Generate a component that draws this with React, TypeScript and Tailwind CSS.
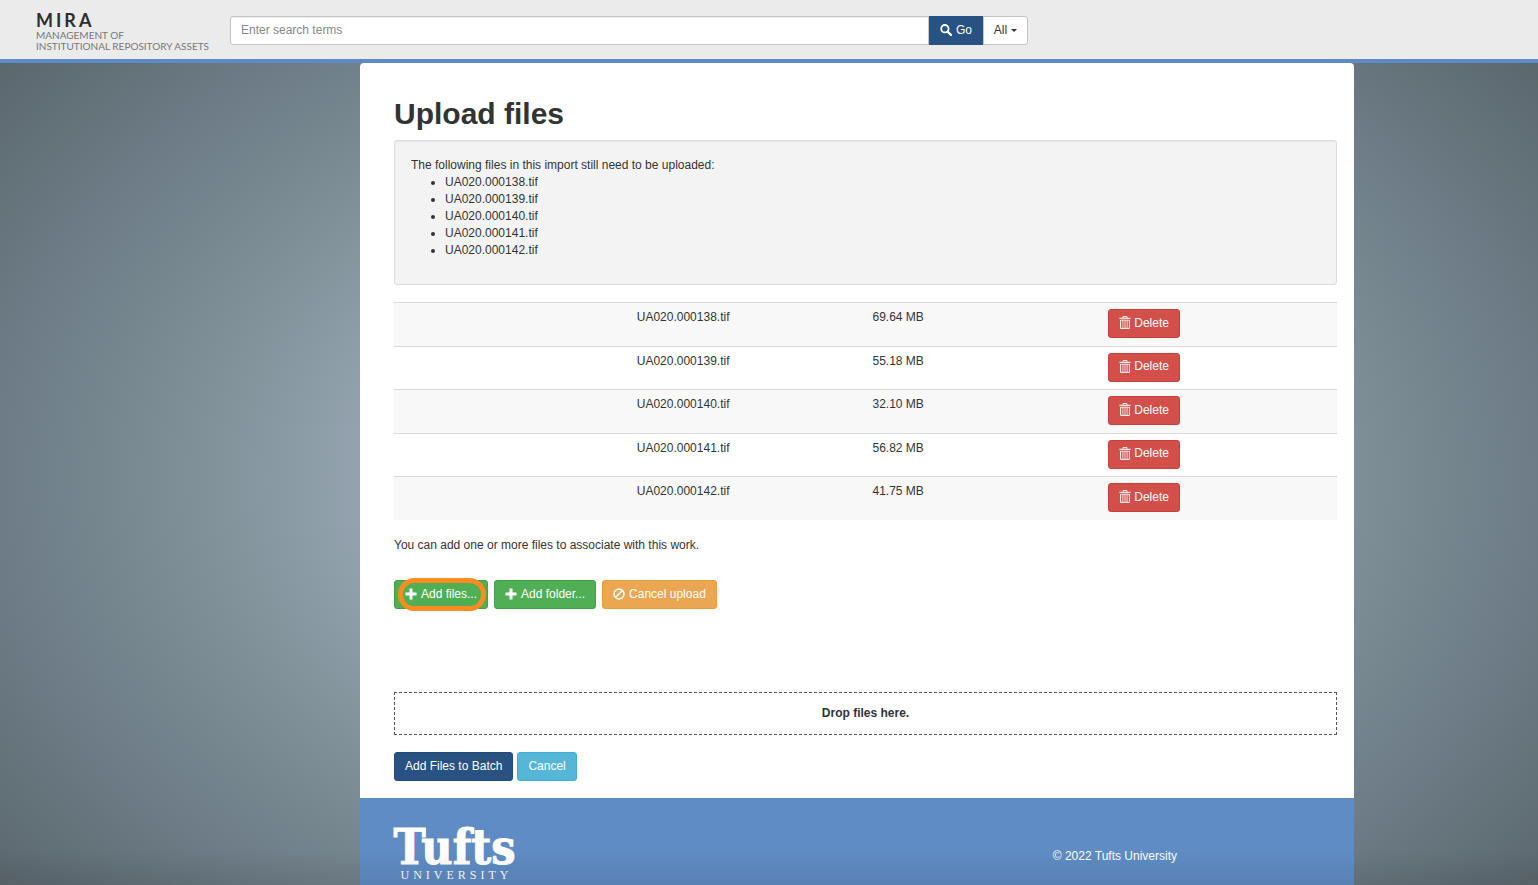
import React from "react";

const files = [
  { name: "UA020.000138.tif", size: "69.64 MB" },
  { name: "UA020.000139.tif", size: "55.18 MB" },
  { name: "UA020.000140.tif", size: "32.10 MB" },
  { name: "UA020.000141.tif", size: "56.82 MB" },
  { name: "UA020.000142.tif", size: "41.75 MB" },
];

function SearchIcon() {
  return (
    <svg className="size-3" viewBox="0 0 12 12" fill="none" stroke="currentColor" aria-hidden="true">
      <circle cx="4.9" cy="4.7" r="3.7" strokeWidth="1.8" />
      <path d="M7.7 7.7 11 11" strokeWidth="2.3" strokeLinecap="round" />
    </svg>
  );
}

function TrashIcon() {
  return (
    <svg className="h-[14px] w-3" viewBox="0 0 12 14" fill="none" stroke="currentColor" aria-hidden="true">
      <path d="M4 1.7V.6h4v1.1" strokeWidth="1" />
      <path d="M.4 2.3h11.2" strokeWidth="1.1" />
      <path d="M1.6 4v8.4h8.8V4" strokeWidth="1" />
      <path d="M1.6 4.2h8.8M3.9 4.2v7.8M6 4.2v7.8M8.1 4.2v7.8" strokeWidth=".8" />
    </svg>
  );
}

function PlusIcon() {
  return (
    <svg className="size-3" viewBox="0 0 12 12" fill="currentColor" aria-hidden="true">
      <path d="M4.9.4h2.2q.4 0 .4.4v3.7h3.7q.4 0 .4.4v2.2q0 .4-.4.4H7.5v3.7q0 .4-.4.4H4.9q-.4 0-.4-.4V7.5H.8q-.4 0-.4-.4V4.9q0-.4.4-.4h3.7V.8q0-.4.4-.4z" />
    </svg>
  );
}

function BanIcon() {
  return (
    <svg className="size-3" viewBox="0 0 12 12" fill="none" stroke="currentColor" strokeWidth="1.6" aria-hidden="true">
      <circle cx="6" cy="6" r="4.9" />
      <path d="M2.7 9.3 9.3 2.7" />
    </svg>
  );
}

const button = "flex h-[29px] cursor-pointer items-center rounded-[3px] border px-[10px] pb-px text-white";

export default function App() {
  return (
    <div className="relative flex min-h-screen flex-col bg-[radial-gradient(ellipse_50%_60%_at_50%_54%,#9eadb9_0%,#94a3af_53%,#7f9098_75%,#6d7c86_100%,#586469_131%)] font-['Liberation_Sans',Arial,sans-serif] text-xs leading-[17px] text-[#333]">
      <header className="flex h-[63px] shrink-0 items-start gap-4 border-b-4 border-[#5e8bc3] bg-[#ebebeb] pl-9">
        <a href="#" className="flex w-[178px] shrink-0 flex-col pt-[10px] font-['Lato',sans-serif] text-[10px] leading-[11px] whitespace-nowrap text-[#777]">
          <span className="text-lg leading-[20px] font-bold tracking-[3px] text-[#2e2e2e]">MIRA</span>
          <span>MANAGEMENT OF</span>
          <span>INSTITUTIONAL REPOSITORY ASSETS</span>
        </a>
        <form className="flex w-[798px] pt-4" onSubmit={(e) => e.preventDefault()}>
          <input
            type="text"
            aria-label="Search terms"
            placeholder="Enter search terms"
            className="h-[29px] min-w-0 flex-1 rounded-l-[3px] border border-[#c4c4c4] bg-white px-[10px] pb-px shadow-[inset_0_1px_1px_rgba(0,0,0,0.08)] outline-none placeholder:text-[#888]"
          />
          <button type="submit" className="flex h-[29px] w-[54px] items-center justify-center gap-1 bg-[#285282] pb-px text-white">
            <SearchIcon />
            Go
          </button>
          <button type="button" className="flex h-[29px] w-[45px] items-center justify-center gap-1 rounded-r-[3px] border border-[#c4c4c4] bg-white pb-px">
            All
            <svg className="h-[3px] w-[6px]" viewBox="0 0 6 3" fill="currentColor" aria-hidden="true">
              <path d="M0 0h6L3 3z" />
            </svg>
          </button>
        </form>
      </header>

      <div className="mr-[184px] ml-[360px] flex flex-1 flex-col">
        <main className="rounded-t-[4px] bg-white pt-[34px] pr-[17px] pb-[17px] pl-[34px]">
          <h1 className="text-[30px] leading-[34px] font-bold">Upload files</h1>
          <section className="mt-[9px] rounded-[3px] border border-[#dcdcdc] bg-[#f3f3f3] px-4 pt-4 pb-[25px] shadow-[inset_0_1px_1px_rgba(0,0,0,0.05)]">
            <p>The following files in this import still need to be uploaded:</p>
            <ul className="list-disc pl-[34px]">
              {files.map((f) => (
                <li key={f.name}>{f.name}</li>
              ))}
            </ul>
          </section>

          <table className="mt-[17px] h-[218px] w-full table-fixed border-separate border-spacing-0 text-left">
            <tbody>
              {files.map((f) => (
                <tr key={f.name} className="odd:bg-[#f8f8f8]">
                  <td className="border-t border-[#d8d8d8]" />
                  <td className="border-t border-[#d8d8d8] px-[7px] pt-[6px] align-top">{f.name}</td>
                  <td className="border-t border-[#d8d8d8] px-[7px] pt-[6px] align-top">{f.size}</td>
                  <td className="border-t border-[#d8d8d8] px-[7px] pt-[6px] align-top">
                    <button type="button" className={button + " gap-[3px] border-[#c93f3a] bg-[#d24f4a]"}>
                      <TrashIcon />
                      Delete
                    </button>
                  </td>
                </tr>
              ))}
            </tbody>
          </table>

          <p className="mt-[17px]">You can add one or more files to associate with this work.</p>

          <div className="mt-[26px] flex gap-[6px]">
            <div className="relative">
              <button type="button" className={button + " gap-1 border-[#43a047] bg-[#50ae55]"}>
                <PlusIcon />
                Add files...
              </button>
              <span className="pointer-events-none absolute -inset-y-[2px] right-[2px] left-1 rounded-full border-[5px] border-[#fc8b21]" />
            </div>
            <button type="button" className={button + " gap-1 border-[#43a047] bg-[#50ae55]"}>
              <PlusIcon />
              Add folder...
            </button>
            <button type="button" className={button + " gap-1 border-[#e79b3c] bg-[#eaa650]"}>
              <BanIcon />
              Cancel upload
            </button>
          </div>

          <div className="mt-[83px] flex h-[43px] items-center justify-center border border-dashed border-[#555] font-bold">
            Drop files here.
          </div>

          <div className="mt-[17px] flex gap-1">
            <button type="submit" className={button + " border-[#234a78] bg-[#285282]"}>
              Add Files to Batch
            </button>
            <button type="button" className={button + " border-[#40aed3] bg-[#56b6d8]"}>
              Cancel
            </button>
          </div>
        </main>

        <footer className="flex flex-1 items-start justify-between bg-[#5f8cc4] pt-[26px] pr-[177px] pl-8 text-white">
          <a href="#" className="flex w-[125px] flex-col items-center font-['DejaVu_Serif_Condensed','DejaVu_Serif',serif]">
            <span className="text-[48px] leading-[46px] font-bold [-webkit-text-stroke:1px_white]">Tufts</span>
            <span className="pl-1 font-['Liberation_Serif',serif] text-xs leading-[11px] tracking-[4px]">UNIVERSITY</span>
          </a>
          <p className="pt-6">© 2022 Tufts University</p>
        </footer>
      </div>
      <div className="pointer-events-none absolute inset-x-0 bottom-0 h-9 bg-linear-to-t from-black/8 to-transparent" />
    </div>
  );
}
